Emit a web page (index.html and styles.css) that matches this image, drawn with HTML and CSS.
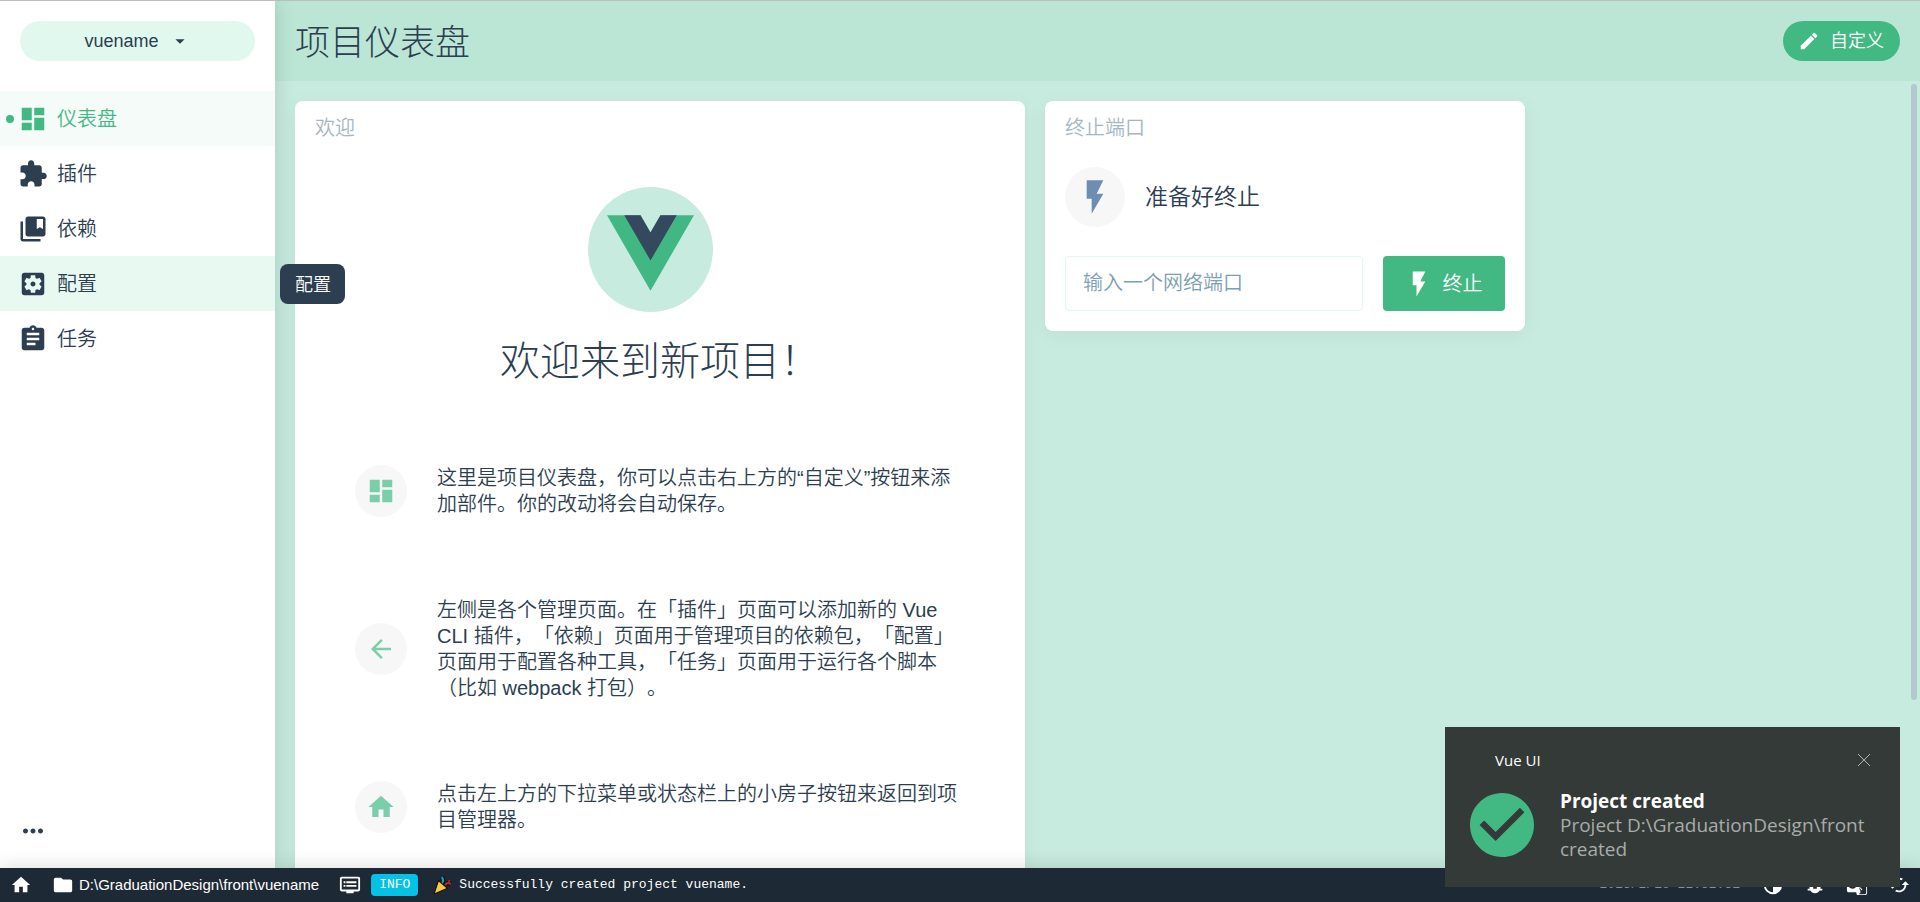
FILE: index.html
```html
<!DOCTYPE html>
<html lang="zh-CN">
<head>
<meta charset="utf-8">
<title>项目仪表盘 - Vue CLI</title>
<link rel="stylesheet" href="styles.css">
</head>
<body>
<div class="app">
  <div class="workspace">
    <aside class="sidebar">
      <button class="project-select" type="button">
        <span>vuename</span>
        <svg class="icon icon-sm" viewBox="0 0 24 24"><path d="M7 10l5 5 5-5z"/></svg>
      </button>
      <nav class="nav">
        <a class="nav-item active" href="#dashboard">
          <svg class="icon icon-lg" viewBox="0 0 24 24"><path d="M3 13h8V3H3v10zm0 8h8v-6H3v6zm10 0h8V11h-8v10zm0-18v6h8V3h-8z"/></svg>
          <span>仪表盘</span>
        </a>
        <a class="nav-item" href="#plugins">
          <svg class="icon icon-lg" viewBox="0 0 24 24"><path d="M20.5 11H19V7c0-1.1-.9-2-2-2h-4V3.5C13 2.12 11.88 1 10.5 1S8 2.12 8 3.5V5H4c-1.1 0-1.99.9-1.99 2v3.8H3.5c1.49 0 2.7 1.21 2.7 2.7s-1.21 2.7-2.7 2.7H2V20c0 1.1.9 2 2 2h3.8v-1.5c0-1.49 1.21-2.7 2.7-2.7 1.49 0 2.7 1.21 2.7 2.7V22H17c1.1 0 2-.9 2-2v-4h1.5c1.38 0 2.5-1.12 2.5-2.5S21.88 11 20.5 11z"/></svg>
          <span>插件</span>
        </a>
        <a class="nav-item" href="#dependencies">
          <svg class="icon icon-lg" viewBox="0 0 24 24"><path d="M4 6H2v14c0 1.1.9 2 2 2h14v-2H4V6z"/><path d="M20 2H8c-1.1 0-2 .9-2 2v12c0 1.1.9 2 2 2h12c1.1 0 2-.9 2-2V4c0-1.1-.9-2-2-2zm0 10l-2.5-1.5L15 12V4h5v8z"/></svg>
          <span>依赖</span>
        </a>
        <a class="nav-item hovered" href="#configuration" aria-describedby="nav-tip">
          <svg class="icon icon-lg" viewBox="0 0 24 24"><path d="M12 10c-1.1 0-2 .9-2 2s.9 2 2 2 2-.9 2-2-.9-2-2-2zm7-7H5c-1.11 0-2 .9-2 2v14c0 1.1.89 2 2 2h14c1.11 0 2-.9 2-2V5c0-1.1-.89-2-2-2zm-1.75 9c0 .23-.02.46-.05.68l1.48 1.16c.13.11.17.3.08.45l-1.4 2.42c-.09.15-.27.21-.43.15l-1.74-.7c-.36.28-.76.51-1.18.69l-.26 1.85c-.03.17-.18.3-.35.3h-2.8c-.17 0-.32-.13-.35-.29l-.26-1.85c-.43-.18-.82-.41-1.18-.69l-1.74.7c-.16.06-.34 0-.43-.15l-1.4-2.42c-.09-.15-.05-.34.08-.45l1.48-1.16c-.03-.23-.05-.46-.05-.69 0-.23.02-.46.05-.68l-1.48-1.16c-.13-.11-.17-.3-.08-.45l1.4-2.42c.09-.15.27-.21.43-.15l1.74.7c.36-.28.76-.51 1.18-.69l.26-1.85c.03-.17.18-.3.35-.3h2.8c.17 0 .32.13.35.29l.26 1.85c.43.18.82.41 1.18.69l1.74-.7c.16-.06.34 0 .43.15l1.4 2.42c.09.15.05.34-.08.45l-1.48 1.16c.03.23.05.46.05.69z"/></svg>
          <span>配置</span>
          <span class="tooltip" id="nav-tip" role="tooltip">配置</span>
        </a>
        <a class="nav-item" href="#tasks">
          <svg class="icon icon-lg" viewBox="0 0 24 24"><path d="M19 3h-4.18C14.4 1.84 13.3 1 12 1c-1.3 0-2.4.84-2.82 2H5c-1.1 0-2 .9-2 2v14c0 1.1.9 2 2 2h14c1.1 0 2-.9 2-2V5c0-1.1-.9-2-2-2zm-7 0c.55 0 1 .45 1 1s-.45 1-1 1-1-.45-1-1 .45-1 1-1zm2 14H7v-2h7v2zm3-4H7v-2h10v2zm0-4H7V7h10v2z"/></svg>
          <span>任务</span>
        </a>
      </nav>
      <button class="more" type="button" aria-label="更多">
        <svg class="icon icon-lg" viewBox="0 0 24 24"><path d="M6 10c-1.1 0-2 .9-2 2s.9 2 2 2 2-.9 2-2-.9-2-2-2zm12 0c-1.1 0-2 .9-2 2s.9 2 2 2 2-.9 2-2-.9-2-2-2zm-6 0c-1.1 0-2 .9-2 2s.9 2 2 2 2-.9 2-2-.9-2-2-2z"/></svg>
      </button>
    </aside>

    <main class="main">
      <header class="header">
        <h1 class="page-title">项目仪表盘</h1>
        <button class="customize" type="button">
          <svg class="icon icon-sm" viewBox="0 0 24 24"><path d="M3 17.25V21h3.75L17.81 9.94l-3.75-3.75L3 17.25zM20.71 7.04c.39-.39.39-1.02 0-1.41l-2.34-2.34c-.39-.39-1.02-.39-1.41 0l-1.83 1.83 3.75 3.75 1.83-1.83z"/></svg>
          <span>自定义</span>
        </button>
      </header>

      <div class="board">
        <section class="card welcome">
          <h2 class="card-title">欢迎</h2>
          <div class="welcome-body">
            <div class="logo">
              <svg class="logo-mark" viewBox="0 0 262 227"><path fill="#41b883" d="M161 0l-30 52L101 0H0l131 227L262 0z"/><path fill="#34495e" d="M161 0l-30 52L101 0H52l79 136L210 0z"/></svg>
            </div>
            <p class="welcome-title">欢迎来到新项目！</p>
            <ul class="tips">
              <li class="tip">
                <span class="tip-icon"><svg class="icon icon-lg" viewBox="0 0 24 24"><path d="M3 13h8V3H3v10zm0 8h8v-6H3v6zm10 0h8V11h-8v10zm0-18v6h8V3h-8z"/></svg></span>
                <p class="tip-text">这里是项目仪表盘，你可以点击右上方的“自定义”按钮来添加部件。你的改动将会自动保存。</p>
              </li>
              <li class="tip">
                <span class="tip-icon"><svg class="icon icon-lg" viewBox="0 0 24 24"><path d="M20 11H7.83l5.59-5.59L12 4l-8 8 8 8 1.41-1.41L7.83 13H20v-2z"/></svg></span>
                <p class="tip-text">左侧是各个管理页面。在「插件」页面可以添加新的 Vue CLI 插件，「依赖」页面用于管理项目的依赖包，「配置」页面用于配置各种工具，「任务」页面用于运行各个脚本（比如 webpack 打包）。</p>
              </li>
              <li class="tip">
                <span class="tip-icon"><svg class="icon icon-lg" viewBox="0 0 24 24"><path d="M10 20v-6h4v6h5v-8h3L12 3 2 12h3v8z"/></svg></span>
                <p class="tip-text">点击左上方的下拉菜单或状态栏上的小房子按钮来返回到项目管理器。</p>
              </li>
            </ul>
          </div>
        </section>

        <section class="card kill-port">
          <h2 class="card-title">终止端口</h2>
          <div class="kill-status">
            <span class="kill-icon"><svg class="icon icon-xl" viewBox="0 0 24 24"><path d="M7 2v11h3v9l7-12h-4l4-8z"/></svg></span>
            <span>准备好终止</span>
          </div>
          <form class="kill-form">
            <input class="port-input" type="text" placeholder="输入一个网络端口" aria-label="输入一个网络端口">
            <button class="kill-button" type="button">
              <svg class="icon icon-lg" viewBox="0 0 24 24"><path d="M7 2v11h3v9l7-12h-4l4-8z"/></svg>
              <span>终止</span>
            </button>
          </form>
        </section>
      </div>
      <div class="scroll-thumb"></div>
    </main>
  </div>

  <footer class="status-bar">
    <button class="status-item" type="button" aria-label="项目管理器">
      <svg class="icon icon-sm" viewBox="0 0 24 24"><path d="M10 20v-6h4v6h5v-8h3L12 3 2 12h3v8z"/></svg>
    </button>
    <button class="status-item" type="button">
      <svg class="icon icon-sm" viewBox="0 0 24 24"><path d="M10 4H4c-1.1 0-1.99.9-1.99 2L2 18c0 1.1.9 2 2 2h16c1.1 0 2-.9 2-2V8c0-1.1-.9-2-2-2h-8l-2-2z"/></svg>
      <span>D:\GraduationDesign\front\vuename</span>
    </button>
    <button class="status-item log" type="button">
      <svg class="icon icon-sm" viewBox="0 0 24 24"><path d="M21 3H3c-1.1 0-2 .9-2 2v12c0 1.1.9 2 2 2h5v2h8v-2h5c1.1 0 1.99-.9 1.99-2L23 5c0-1.1-.9-2-2-2zm0 14H3V5h18v12zm-2-9H8v2h11V8zm0 4H8v2h11v-2zM7 8H5v2h2V8zm0 4H5v2h2v-2z"/></svg>
      <span class="badge">INFO</span>
      <svg class="party" viewBox="0 0 16 16"><path fill="none" stroke="#0b0e11" stroke-width="4" d="M7 6c2-1 1-3 0-5M10 8c1-2 3-2 5-1"/><path fill="#ffc83d" stroke="#15110a" d="M4 4l8 7L0 16z"/><path fill="none" stroke="#1b98c4" stroke-width="2" d="M7 6c2-1 1-3 0-5"/><path fill="none" stroke="#b5282d" stroke-width="2" d="M10 8c1-2 3-2 5-1M13 4l1 1"/></svg>
      <span class="log-text">Successfully created project vuename.</span>
    </button>
    <div class="status-right">
      <time class="log-time">2023/2/18 22:52:31</time>
      <button class="status-item" type="button" aria-label="切换主题">
        <svg class="icon icon-sm" viewBox="0 0 24 24"><path d="M12 2a10 10 0 100 20 10 10 0 000-20zm0 18a8 8 0 010-16v16z"/></svg>
      </button>
      <button class="status-item" type="button" aria-label="报告问题">
        <svg class="icon icon-sm" viewBox="0 0 24 24"><path d="M20 8h-2.81c-.45-.78-1.07-1.45-1.82-1.96L17 4.41 15.59 3l-2.17 2.17C12.96 5.06 12.49 5 12 5s-.96.06-1.41.17L8.41 3 7 4.41l1.62 1.63C7.88 6.55 7.26 7.22 6.81 8H4v2h2.09c-.05.33-.09.66-.09 1v1H4v2h2v1c0 .34.04.67.09 1H4v2h2.81c1.04 1.79 2.97 3 5.19 3s4.15-1.21 5.19-3H20v-2h-2.09c.05-.33.09-.66.09-1v-1h2v-2h-2v-1c0-.34-.04-.67-.09-1H20V8zm-6 8h-4v-2h4v2zm0-4h-4v-2h4v2z"/></svg>
      </button>
      <button class="status-item" type="button" aria-label="翻译">
        <svg class="icon icon-sm" viewBox="0 0 24 24"><path fill-rule="evenodd" d="M21 4H11l-1-3H3c-1.1 0-2 .9-2 2v15c0 1.1.9 2 2 2h8l1 3h9c1.1 0 2-.9 2-2V6c0-1.1-.9-2-2-2zM7 16c-2.76 0-5-2.24-5-5s2.24-5 5-5c1.35 0 2.48.5 3.35 1.3L9.03 8.57C8.66 8.21 8.01 7.8 7 7.8c-1.74 0-3.15 1.44-3.15 3.2S5.26 14.2 7 14.2c2 0 2.76-1.45 2.88-2.2H7v-1.7h4.68c.05.25.08.5.08.8 0 2.9-1.94 4.9-4.76 4.9zM22 21c0 .55-.45 1-1 1h-7l2-2-2-6 3 4 1-1-4-4h6v-1h-7L11.300 5H21c.55 0 1 .45 1 1v15z"/></svg>
      </button>
      <button class="status-item" type="button" aria-label="刷新">
        <svg class="icon icon-sm" viewBox="0 0 24 24"><path d="M19 8l-4 4h3c0 3.31-2.69 6-6 6-1.01 0-1.97-.25-2.8-.7l-1.46 1.46C8.97 19.54 10.43 20 12 20c4.42 0 8-3.58 8-8h3l-4-4zM6 12c0-3.31 2.69-6 6-6 1.01 0 1.97.25 2.8.7l1.46-1.46C15.03 4.46 13.57 4 12 4c-4.42 0-8 3.58-8 8H1l4 4 4-4H6z"/></svg>
      </button>
    </div>
  </footer>

  <div class="toast" role="status">
    <div class="toast-head">
      <span>Vue UI</span>
      <button class="toast-close" type="button" aria-label="关闭">
        <svg class="close-mark" viewBox="0 0 12 12"><path d="M0 0l12 12M12 0L0 12"/></svg>
      </button>
    </div>
    <div class="toast-body">
      <svg class="toast-check" viewBox="2 2 20 20"><path d="M12 2C6.48 2 2 6.48 2 12s4.48 10 10 10 10-4.48 10-10S17.52 2 12 2zm-2 15l-5-5 1.41-1.41L10 14.17l7.59-7.59L19 8l-9 9z"/></svg>
      <div>
        <p class="toast-title">Project created</p>
        <p class="toast-text">Project D:\GraduationDesign\front created</p>
      </div>
    </div>
  </div>
</div>
</body>
</html>
```
FILE: styles.css
```css
:root {
  --green: #42b983;
  --dark: #2c3e50;
  --mint: #c7ebdf;
}

* {
  box-sizing: border-box;
}

body {
  margin: 0;
  color: var(--dark);
  font-family: "Liberation Sans", "Noto Sans CJK SC", sans-serif;
  font-size: 20px;
  font-weight: 350;
  line-height: 26px;
  text-spacing-trim: space-all;
}

h1, h2, p, ul {
  margin: 0;
  padding: 0;
  font-weight: inherit;
}

button {
  padding: 0;
  border: 0;
  background: none;
  color: inherit;
  font: inherit;
}

a {
  color: inherit;
  text-decoration: none;
}

.icon {
  flex: none;
  display: block;
  fill: currentColor;
}

.icon-sm { width: 22px; height: 22px; }
.icon-lg { width: 30px; height: 30px; }
.icon-xl { width: 40px; height: 40px; }

.app {
  position: relative;
  display: flex;
  flex-direction: column;
  height: 100vh;
  overflow: hidden;
  border-top: 1px solid #bdbdbd;
}

.workspace {
  flex: 1;
  display: flex;
  min-height: 0;
}

/* Sidebar */
.sidebar {
  position: relative;
  z-index: 1;
  flex: none;
  display: flex;
  flex-direction: column;
  width: 275px;
  background: #fff;
  box-shadow: 0 0 20px rgba(0, 0, 0, .15);
}

.project-select {
  display: flex;
  align-items: center;
  justify-content: center;
  gap: 10px;
  height: 40px;
  margin: 20px 20px 30px;
  border-radius: 20px;
  background: #e0f8ed;
  font-size: 18px;
}

.nav-item {
  position: relative;
  display: flex;
  align-items: center;
  gap: 9px;
  height: 55px;
  padding-left: 18px;
}

.nav-item.active {
  background: #f5fbf9;
  color: var(--green);
}

.nav-item.active::before {
  content: "";
  position: absolute;
  left: 6px;
  width: 8px;
  height: 8px;
  border-radius: 50%;
  background: var(--green);
}

.nav-item.hovered {
  background: #e7f9f1;
}

.tooltip {
  position: absolute;
  left: 280px;
  padding: 8px 14px 6px 15px;
  border-radius: 8px;
  background: var(--dark);
  color: #fff;
  font-size: 18px;
  white-space: nowrap;
}

.more {
  align-self: flex-start;
  margin: auto 18px 22px;
}

/* Main area */
.main {
  position: relative;
  flex: 1;
  display: flex;
  flex-direction: column;
  min-width: 0;
  background: var(--mint);
}

.header {
  flex: none;
  display: flex;
  align-items: center;
  justify-content: space-between;
  height: 80px;
  padding: 0 20px;
  background: #bbe6d5;
}

.page-title {
  padding-top: 4px;
  font-size: 35px;
  font-weight: 300;
  line-height: 40px;
}

.customize {
  display: flex;
  align-items: center;
  gap: 10px;
  height: 40px;
  padding: 0 16px 0 15px;
  border-radius: 20px;
  background: var(--green);
  color: #fff;
  font-size: 18px;
}

.board {
  flex: 1;
  display: flex;
  align-items: flex-start;
  gap: 20px;
  min-height: 0;
  padding: 20px;
  overflow: hidden;
}

.card {
  flex: none;
  padding: 14px 20px 20px;
  border-radius: 8px;
  background: #fff;
  box-shadow: 0 4px 20px rgba(0, 0, 0, .05);
}

.card-title {
  color: #a6b7c2;
  font-size: 20px;
}

.welcome {
  width: 730px;
}

.kill-port {
  width: 480px;
}

.welcome-body {
  display: flex;
  flex-direction: column;
  align-items: center;
  padding: 46px 40px 100px;
}

.logo {
  display: flex;
  align-items: center;
  justify-content: center;
  width: 125px;
  height: 125px;
  margin-right: 20px;
  border-radius: 50%;
  background: var(--mint);
}

.logo-mark {
  width: 87px;
  height: 76px;
  margin-top: 6px;
}

.welcome-title {
  margin-top: 20px;
  font-size: 40px;
  font-weight: 300;
  line-height: 58px;
}

.tips {
  display: flex;
  flex-direction: column;
  gap: 80px;
  width: 610px;
  margin-top: 75px;
  list-style: none;
}

.tip {
  display: flex;
  align-items: center;
  gap: 30px;
}

.tip-text {
  flex: 1;
}

.tip-icon,
.kill-icon {
  flex: none;
  display: flex;
  align-items: center;
  justify-content: center;
  border-radius: 50%;
  background: #f7f7f7;
}

.tip-icon {
  width: 52px;
  height: 52px;
  color: #7aceaa;
}

.kill-icon {
  width: 60px;
  height: 60px;
  color: #6b8eb2;
}

.kill-status {
  display: flex;
  align-items: center;
  gap: 20px;
  margin: 26px 0 29px;
  font-size: 23px;
}

.kill-form {
  display: flex;
  gap: 20px;
}

.port-input {
  flex: 1;
  min-width: 0;
  height: 55px;
  padding: 0 17px;
  border: 1px solid #e0f8ed;
  border-radius: 4px;
  color: inherit;
  font: inherit;
}

.port-input::placeholder {
  color: #7d9fb3;
  opacity: 1;
}

.kill-button {
  display: flex;
  align-items: center;
  justify-content: center;
  gap: 9px;
  width: 122px;
  padding-right: 2px;
  border-radius: 4px;
  background: var(--green);
  color: #fff;
}

.scroll-thumb {
  position: absolute;
  top: 83px;
  right: 3px;
  width: 6px;
  height: 71%;
  border-radius: 3px;
  background: #b4c8cf;
}

/* Status bar */
.status-bar {
  position: relative;
  z-index: 2;
  flex: none;
  display: flex;
  align-items: center;
  height: 34px;
  background: #1d2935;
  box-shadow: 0 0 20px rgba(0, 0, 0, .15);
  color: #fff;
  font-size: 15px;
}

.status-item {
  display: flex;
  align-items: center;
  gap: 5px;
  padding: 0 10px;
}

.log {
  font-family: "Liberation Mono", monospace;
  font-size: 13px;
}

.badge {
  margin-left: 5px;
  padding: 0 8px;
  border-radius: 4px;
  background: #03c2e6;
  line-height: 22px;
}

.party {
  width: 18px;
  height: 18px;
  margin: 0 2px 0 11px;
}

.status-right {
  display: flex;
  align-items: center;
  margin-left: auto;
}

.log-time {
  margin-right: 12px;
  color: #82909b;
  font-family: "Liberation Mono", monospace;
  font-size: 13px;
}

/* Desktop notification */
.toast {
  position: absolute;
  right: 20px;
  bottom: 15px;
  z-index: 3;
  width: 455px;
  height: 160px;
  padding: 20px 25px;
  background: #333a37;
  color: #fff;
  font-family: "Open Sans", "Noto Sans", sans-serif;
  font-weight: 400;
}

.toast-head {
  display: flex;
  align-items: center;
  justify-content: space-between;
  padding: 0 5px 0 25px;
  font-size: 15px;
}

.close-mark {
  display: block;
  width: 12px;
  height: 12px;
  fill: none;
  stroke: #b0b3b2;
}

.toast-body {
  display: flex;
  align-items: center;
  gap: 26px;
  margin-top: 16px;
}

.toast-check {
  flex: none;
  width: 64px;
  height: 64px;
  fill: var(--green);
}

.toast-title,
.toast-text {
  font-size: 19px;
  line-height: 24px;
}

.toast-title {
  font-weight: 700;
}

.toast-text {
  color: #a8abaa;
}
```
